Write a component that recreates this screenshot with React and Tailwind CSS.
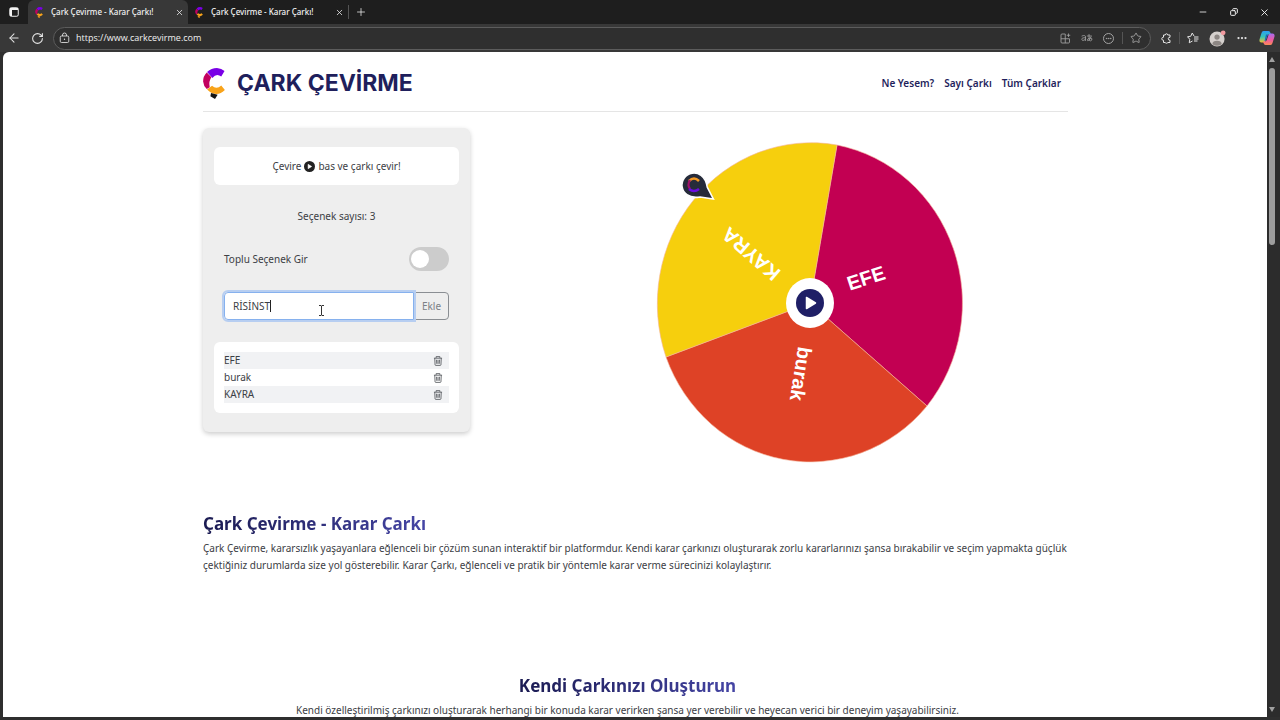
import { useState } from 'react'
import { ArrowLeft, Copy, Ellipsis, Minus, Plus, RotateCw, Star, X } from 'lucide-react'

const TABS = [
  { id: 1, title: 'Çark Çevirme - Karar Çarkı!', active: true },
  { id: 2, title: 'Çark Çevirme - Karar Çarkı!', active: false },
]

const NAV_LINKS = ['Ne Yesem?', 'Sayı Çarkı', 'Tüm Çarklar']

// label positions are in the wheel's own viewBox units
const SLICES = [
  { name: 'EFE', fill: '#c20052', path: 'M154 161 L181 3 A154 161 0 0 1 271 264 Z', x: 210, y: 136, angle: -18 },
  { name: 'burak', fill: '#de4226', path: 'M154 161 L271 264 A154 161 0 0 1 10 215 Z', x: 145, y: 232, angle: 99 },
  { name: 'KAYRA', fill: '#f6cf0d', path: 'M154 161 L10 215 A154 161 0 0 1 181 3 Z', x: 95, y: 112, angle: 221 },
]

function LogoMark({ className, tail = '#141414' }) {
  return (
    <svg viewBox="0 0 66 94" className={className} aria-hidden="true">
      <path d="M12 12 Q25 0 42 0 Q56 1 65 9 L55 26 Q41 14 28 30 Z" fill="#7a00e6" />
      <path d="M11 14 Q0 25 0 41 Q1 54 11 64 L20 58 Q16 41 25 28 Z" fill="#c2005f" />
      <path d="M12 65 L27 54 Q41 66 55 53 L66 67 Q40 92 12 65 Z" fill="#f8a31a" />
      <path d="M24 76 L44 81 L36 94 L22 86 Z" fill={tail} />
    </svg>
  )
}

function PlayIcon({ className, fill }) {
  return (
    <svg viewBox="0 0 28 28" className={className} aria-hidden="true">
      <circle cx="14" cy="14" r="14" fill={fill} />
      <path d="M10.500 8.500 V19.500 L19.500 14 Z" fill="#fff" stroke="#fff" strokeWidth="1.500" strokeLinejoin="round" />
    </svg>
  )
}

function TrashIcon() {
  return (
    <svg viewBox="0 0 16 16" className="h-[10px] w-[10px]" fill="none" stroke="#4c5055" strokeWidth="1.300">
      <path d="M1.500 3.500 H14.500 M5 3 V1 H11 V3 M2.800 3.500 L3.300 14 Q3.400 15 4.500 15 H11.500 Q12.600 15 12.700 14 L13.200 3.500 M5.600 6 L6 12.500 M8 6 V12.500 M10.400 6 L10 12.500" />
    </svg>
  )
}

function LockIcon() {
  return (
    <svg viewBox="0 0 22 24" className="h-3 w-[11px] shrink-0" fill="none" stroke="currentColor" strokeWidth="1.700">
      <rect x="2.500" y="8" width="17" height="13" rx="2.500" />
      <path d="M7 8 V6 A4 4 0 0 1 15 6 V8" />
      <circle cx="11" cy="14.500" r="1.300" fill="currentColor" stroke="none" />
    </svg>
  )
}

function TabActionsIcon() {
  return (
    <svg viewBox="0 0 20 20" className="h-[10px] w-[10px]" aria-hidden="true">
      <rect x="1.500" y="1.500" width="17" height="17" rx="3" fill="none" stroke="currentColor" strokeWidth="2" />
      <path d="M2 2 H18 V6 H6 V18 H2 Z" fill="currentColor" />
    </svg>
  )
}

function AppsIcon() {
  return (
    <svg viewBox="0 0 22 22" className="h-[11px] w-[11px]" fill="none" stroke="currentColor" strokeWidth="1.700">
      <path d="M10.500 2 H4 Q2 2 2 4 V18 Q2 20 4 20 H17 Q19 20 19 18 V11.500 H2 M10.500 2 V20 M17 1 V8 M13.500 4.500 H20.500" />
    </svg>
  )
}

function TranslateIcon() {
  return (
    <svg viewBox="0 0 24 20" className="h-[10px] w-3" fill="none" stroke="currentColor" strokeWidth="1.600" strokeLinecap="round">
      <path d="M2 6 Q9 3 9 8 V15 M9 9.500 Q1.500 9 1.500 12.500 Q2 16 6 14.500 Q8 14 9 12" />
      <path d="M12.500 6 H21 M16 3 Q15.500 10 17 15 M20 8 Q17 15.500 13.500 15.500 Q11.500 14.500 14 11.500 Q18 8.500 21.500 11 Q23.500 14.500 19 16" />
    </svg>
  )
}

function ExtensionsIcon() {
  return (
    <svg viewBox="0 0 22 22" className="h-[11px] w-[11px]" fill="none" stroke="currentColor" strokeWidth="2" strokeLinejoin="round">
      <path d="M5 4 H8.500 Q8.500 1.500 11 1.500 Q13.500 1.500 13.500 4 H18 V8.500 Q14.500 8.500 14.500 11.500 Q14.500 14.500 18 14.500 V19 H13.500 Q13.500 20.500 11 20.500 Q8.500 20.500 8.500 19 H5 V14.500 Q1.500 14.500 1.500 11.500 Q1.500 8.500 5 8.500 Z" />
    </svg>
  )
}

function CopilotIcon() {
  return (
    <svg viewBox="0 0 32 32" className="h-4 w-4" aria-hidden="true">
      <defs>
        <linearGradient id="copilot-left" x1="0" y1="0" x2="0" y2="1">
          <stop offset="0" stopColor="#2b9cf5" />
          <stop offset="0.500" stopColor="#35c5b5" />
          <stop offset="1" stopColor="#f2c230" />
        </linearGradient>
        <linearGradient id="copilot-right" x1="0" y1="0" x2="0" y2="1">
          <stop offset="0" stopColor="#a66bf0" />
          <stop offset="0.550" stopColor="#ef5aa0" />
          <stop offset="1" stopColor="#fb8a55" />
        </linearGradient>
      </defs>
      <path d="M9 2 H19 Q22 2 23 6 L24 9 H20 Q17 9 16 13 L13 22 Q12 25 9 25 H5 Q0 25 1 19 L5 6 Q6 2 9 2 Z" fill="url(#copilot-left)" />
      <path d="M23 30 H13 Q10 30 9 26 L8 23 H12 Q15 23 16 19 L19 10 Q20 7 23 7 H27 Q32 7 31 13 L27 26 Q26 30 23 30 Z" fill="url(#copilot-right)" />
      <path d="M14 9 H20 Q17 9 16 13 L13 22 H11 Z" fill="#1d5fc4" />
    </svg>
  )
}

function TabStrip() {
  return (
    <div className="flex h-6 shrink-0 items-stretch bg-[#1e1e1e] text-[#f2f2f2]">
      <button className="grid w-7 place-items-center" aria-label="Sekme eylemleri">
        <TabActionsIcon />
      </button>
      {TABS.map((tab) => (
        <div
          key={tab.id}
          className={`flex w-[160px] items-center gap-2 rounded-t-md pr-px pl-[7px] ${tab.active ? 'bg-[#383838]' : ''}`}
        >
          <LogoMark className="h-[11px] w-2 shrink-0" tail="#f8a31a" />
          <span className="flex-1 font-['Noto_Sans',sans-serif] text-[8px] font-medium whitespace-nowrap">{tab.title}</span>
          <button className="grid h-4 w-4 place-items-center" aria-label="Sekmeyi kapat">
            <X className="h-[9px] w-[9px]" />
          </button>
        </div>
      ))}
      <div className="my-auto h-[14px] w-px bg-[#555]" />
      <button className="grid w-6 place-items-center" aria-label="Yeni sekme">
        <Plus className="h-3 w-3" strokeWidth={1.5} />
      </button>
      <div className="ml-auto flex">
        <button className="grid w-[31px] place-items-center" aria-label="Küçült">
          <Minus className="h-[10px] w-[10px]" />
        </button>
        <button className="grid w-[31px] place-items-center" aria-label="Geri yükle">
          <Copy className="h-2 w-2 -scale-x-100" strokeWidth={3} />
        </button>
        <button className="grid w-[31px] place-items-center" aria-label="Kapat">
          <X className="h-[11px] w-[11px]" />
        </button>
      </div>
    </div>
  )
}

function Toolbar() {
  return (
    <div className="flex h-7 shrink-0 items-center bg-[#383838] text-[#e4e4e4]">
      <button className="grid w-[27px] place-items-center" aria-label="Geri">
        <ArrowLeft className="h-[14px] w-[14px]" strokeWidth={1.8} />
      </button>
      <button className="mr-[5px] grid w-[21px] place-items-center" aria-label="Yenile">
        <RotateCw className="h-[13px] w-[13px]" />
      </button>
      <div className="flex h-[23px] flex-1 items-center rounded-full border border-[#5c5c5c] bg-[#2f2f2f] pr-1 pl-[5px]">
        <LockIcon />
        <input
          aria-label="Adres"
          defaultValue="https://www.carkcevirme.com"
          className="min-w-0 flex-1 bg-transparent px-[6px] font-['Open_Sans',sans-serif] text-[9px] font-medium text-[#f0f0f0] outline-none"
        />
        <div className="flex items-center text-[#a3a3a3]">
          <button className="grid w-[22px] place-items-center" aria-label="Uygulamalar">
            <AppsIcon />
          </button>
          <button className="grid w-[21px] place-items-center" aria-label="Çevir">
            <TranslateIcon />
          </button>
          <button className="grid w-[22px] place-items-center" aria-label="Diğer">
            <span className="grid h-[11px] w-[11px] place-items-center rounded-full border border-[#a3a3a3]">
              <Ellipsis className="h-[7px] w-[7px]" strokeWidth={3} />
            </span>
          </button>
          <div className="mx-[3px] h-3 w-px bg-[#555]" />
          <button className="grid w-5 place-items-center" aria-label="Sık kullanılanlara ekle">
            <Star className="h-3 w-3" strokeWidth={1.8} />
          </button>
        </div>
      </div>
      <div className="flex items-center pl-[3px]">
        <button className="grid w-6 place-items-center" aria-label="Uzantılar">
          <ExtensionsIcon />
        </button>
        <div className="mx-px h-3 w-px bg-[#555]" />
        <button className="grid w-6 place-items-center" aria-label="Sık kullanılanlar">
          <svg viewBox="0 0 24 24" className="h-3 w-3" fill="none" stroke="currentColor" strokeWidth="2" strokeLinejoin="round">
            <path d="M14 8 L10.500 2 L7.500 8.500 L1 9.500 L5.500 14.500 L4.500 21.500 L11 18 M14 10 H23 M14 14 H23 M14 18 H21" />
          </svg>
        </button>
        <button className="grid w-[25px] place-items-center" aria-label="Profil">
          <svg viewBox="0 0 18 18" className="h-[17px] w-[17px]">
            <circle cx="8.500" cy="9.500" r="8" fill="#d5d0cd" />
            <circle cx="8.500" cy="7.500" r="2.800" fill="#8d8784" />
            <path d="M3.500 15 Q4 11.500 8.500 11.500 Q13 11.500 13.500 15 Q8.500 18.500 3.500 15 Z" fill="#8d8784" />
            <circle cx="15" cy="3" r="2.500" fill="#f29a9f" />
          </svg>
        </button>
        <button className="grid w-6 place-items-center" aria-label="Ayarlar">
          <Ellipsis className="h-3 w-3" strokeWidth={2.5} />
        </button>
        <button className="grid w-[26px] place-items-center" aria-label="Copilot">
          <CopilotIcon />
        </button>
      </div>
    </div>
  )
}

function OptionsPanel() {
  const [options, setOptions] = useState(SLICES.map((s) => s.name))
  const [draft, setDraft] = useState('RİSİNST')
  const [bulk, setBulk] = useState(false)

  const addOption = (e) => {
    e.preventDefault()
    if (!draft.trim()) return
    setOptions([...options, draft.trim()])
    setDraft('')
  }

  return (
    <section className="w-[267px] shrink-0 rounded-md bg-[#eee] px-[11px] py-[19px] shadow-[0_2px_5px_rgba(0,0,0,0.2)]">
      <p className="flex h-[38px] items-center justify-center gap-[3px] rounded-md bg-white">
        Çevire <PlayIcon className="h-[11px] w-[11px]" fill="#222" /> bas ve çarkı çevir!
      </p>
      <p className="mt-[23px] text-center">Seçenek sayısı: {options.length}</p>

      <div className="mt-[22px] flex items-center justify-between px-[10px]">
        <label htmlFor="bulk">Toplu Seçenek Gir</label>
        <input
          id="bulk"
          type="checkbox"
          checked={bulk}
          onChange={(e) => setBulk(e.target.checked)}
          className="flex h-6 w-10 appearance-none items-center rounded-full bg-[#ccc] px-[2px] before:h-[18px] before:w-[18px] before:rounded-full before:bg-white checked:bg-[#28286e] checked:before:ml-auto"
        />
      </div>

      <form onSubmit={addOption} className="mt-[21px] flex px-[10px]">
        <div className="relative min-w-0 flex-1">
          <input
            aria-label="Seçenek"
            value={draft}
            onChange={(e) => setDraft(e.target.value)}
            className="h-7 w-full rounded-l border border-[#86b1ee] bg-white px-2 outline-2 outline-[#b7cef1]"
          />
          {/* text caret and mouse pointer */}
          <span className="absolute top-2 left-[46px] h-3 w-px bg-[#222]" />
          <svg viewBox="0 0 5 11" className="absolute top-[13px] left-[95px] h-[11px] w-[5px]" fill="none" stroke="#333">
            <path d="M0 0.500 H2 L2.500 1 L3 0.500 H5 M2.500 1 V10 M0 10.500 H2 L2.500 10 L3 10.500 H5" />
          </svg>
        </div>
        <button className="w-[35px] rounded-r border border-[#8a8e93] text-[#7b8086]">Ekle</button>
      </form>

      <ul className="mt-[22px] rounded-md bg-white px-[10px] py-[10px]">
        {options.map((name) => (
          <li key={name} className="flex h-[17px] items-center justify-between pr-[6px] odd:bg-[#f1f2f4]">
            {name}
            <button aria-label={`${name} sil`} onClick={() => setOptions(options.filter((o) => o !== name))}>
              <TrashIcon />
            </button>
          </li>
        ))}
      </ul>
    </section>
  )
}

function Wheel() {
  return (
    <div className="relative">
      <svg viewBox="0 0 308 322" className="block w-[308px]">
        {SLICES.map((s) => (
          <path key={s.name} d={s.path} fill={s.fill} stroke="#f3b49a" strokeWidth="0.600" />
        ))}
        {SLICES.map((s) => (
          <text
            key={s.name}
            transform={`translate(${s.x} ${s.y}) rotate(${s.angle})`}
            textAnchor="middle"
            dominantBaseline="central"
            className="fill-white font-['Liberation_Sans',sans-serif] text-[20px] font-bold"
          >
            {s.name}
          </text>
        ))}
        {/* pointer pin */}
        <g transform="translate(38 43) rotate(36)">
          <path
            d="M0 -12 C6 -12 9 -9 12 -6 L24 0 L12 6 C9 9 6 12 0 12 A12 12 0 0 1 0 -12 Z"
            fill="#262b3a"
            stroke="#fff"
            strokeWidth="1.500"
          />
        </g>
        <path d="M33 39 Q38 34 43 39" fill="none" stroke="#f59a23" strokeWidth="2.500" />
        <path d="M34 38 Q31 43 34 47" fill="none" stroke="#a0106a" strokeWidth="2.200" />
        <path d="M33 47 Q38 51 43 47" fill="none" stroke="#6a0be0" strokeWidth="2.500" />
      </svg>
      <button
        aria-label="Çarkı çevir"
        className="absolute top-1/2 left-1/2 grid h-[50px] w-12 -translate-x-1/2 -translate-y-1/2 place-items-center rounded-[50%] bg-white"
      >
        <PlayIcon className="h-7 w-7" fill="#1f1f66" />
      </button>
    </div>
  )
}

function GradientHeading({ children }) {
  return (
    <h2 className="w-fit bg-linear-to-r from-[#1b1b52] to-[#4545a5] bg-clip-text text-[17px] leading-6 font-bold text-transparent">
      {children}
    </h2>
  )
}

function Scrollbar() {
  return (
    <div className="flex w-[13px] shrink-0 flex-col items-center bg-[#2c2c2c] py-[5px] pr-[3px]">
      <svg viewBox="0 0 6 5" className="h-[5px] w-[6px]">
        <path d="M3 0 L6 5 H0 Z" fill="#a0a0a0" />
      </svg>
      <div className="mt-[6px] h-[27%] w-[6px] rounded-full bg-[#9d9d9d]" />
      <svg viewBox="0 0 6 5" className="mt-auto h-[5px] w-[6px]">
        <path d="M3 5 L0 0 H6 Z" fill="#a0a0a0" />
      </svg>
    </div>
  )
}

export default function App() {
  return (
    <div className="flex h-screen flex-col overflow-hidden bg-[#2f2f2f] font-['Noto_Sans',sans-serif]">
      <TabStrip />
      <Toolbar />
      <div className="flex min-h-0 flex-1 pb-[3px] pl-[3px]">
        <div className="min-w-0 flex-1 overflow-hidden rounded-tl-md bg-white pl-px text-[10px] leading-[17px] text-[#3c4045]">
          <div className="mx-auto w-[865px] max-w-full">
            <header className="flex h-[60px] items-center justify-between border-b border-[#e5e5e5] pt-[3px] pr-[7px]">
              <a href="#" className="flex items-center gap-3">
                <LogoMark className="h-[31px] w-[22px]" />
                <span className="font-[Inter,sans-serif] text-[23px] leading-7 font-bold text-[#1f1f5c]">ÇARK ÇEVİRME</span>
              </a>
              <nav className="flex gap-[10px] font-semibold text-[#1f1f5c]">
                {NAV_LINKS.map((link) => (
                  <a key={link} href="#">
                    {link}
                  </a>
                ))}
              </nav>
            </header>

            <main>
              <div className="flex items-start pt-4">
                <OptionsPanel />
                <div className="flex flex-1 justify-center pt-[14px] pl-[82px]">
                  <Wheel />
                </div>
              </div>

              <section className="mt-12">
                <GradientHeading>Çark Çevirme - Karar Çarkı</GradientHeading>
                <p className="mt-1">
                  Çark Çevirme, kararsızlık yaşayanlara eğlenceli bir çözüm sunan interaktif bir platformdur. Kendi karar
                  çarkınızı oluşturarak zorlu kararlarınızı şansa bırakabilir ve seçim yapmakta güçlük çektiğiniz
                  durumlarda size yol gösterebilir. Karar Çarkı, eğlenceli ve pratik bir yöntemle karar verme sürecinizi
                  kolaylaştırır.
                </p>
              </section>

              <section className="mt-[100px] flex flex-col items-center gap-1 pr-4">
                <GradientHeading>Kendi Çarkınızı Oluşturun</GradientHeading>
                <p>
                  Kendi özelleştirilmiş çarkınızı oluşturarak herhangi bir konuda karar verirken şansa yer verebilir ve
                  heyecan verici bir deneyim yaşayabilirsiniz.
                </p>
              </section>
            </main>
          </div>
        </div>
        <Scrollbar />
      </div>
    </div>
  )
}
